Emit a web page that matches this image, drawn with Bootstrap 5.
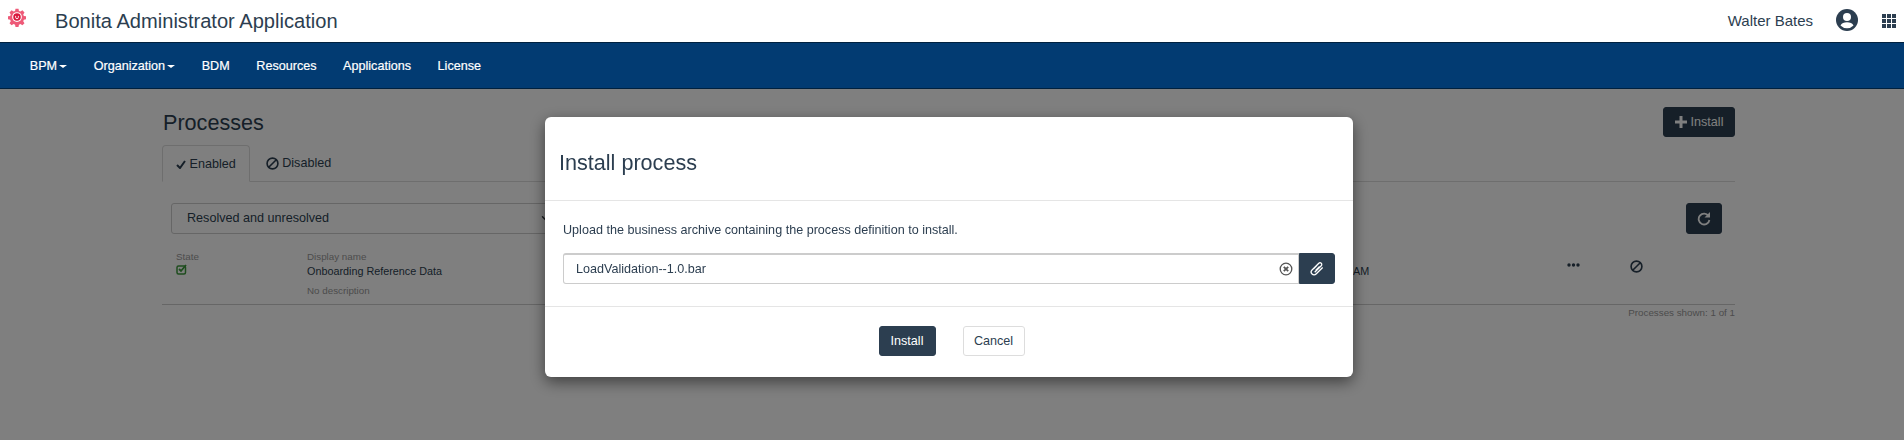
<!DOCTYPE html>
<html lang="en">
<head>
    <meta charset="UTF-8">
    <meta name="viewport" content="width=device-width, initial-scale=1">
    <title>Bonita Administrator Application</title>
    <link href="https://cdn.jsdelivr.net/npm/bootstrap@5.3.0/dist/css/bootstrap.min.css" rel="stylesheet">
    <style>
        html, body { height: 440px; overflow: hidden; }
        body { font-family: "Liberation Sans", Arial, sans-serif; font-size: 12.6px; color: #2c3e50; background: #fff; }

        /* top bars stay above the backdrop */
        .top-zone { position: relative; z-index: 1060; }
        .app-head { height: 43px; background: #fff; border-bottom: 1px solid #00213f; padding: 0 8px; }
        .app-title { font-size: 20.1px; margin: 1px 0 0 29px; line-height: 1; }
        .app-user { font-size: 15px; margin: 1px 23px 0 0; }
        .app-logo { margin-top: -8px; }
        .app-avatar { margin-top: -2px; }
        .menu-bar { height: 46px; background: #023b72; border-bottom: 1px solid #00213f; padding: 1px 16.5px 0; }
        .menu-bar a { color: #fff; font-size: 12.6px; padding: 0 13.3px; text-decoration: none; -webkit-text-stroke: .2px #fff; }
        .caret-down { display: inline-block; border-top: 3px solid #fff; border-left: 4px solid transparent; border-right: 4px solid transparent; margin-left: 2px; vertical-align: middle; }

        /* page under the backdrop */
        .page-main { padding: 18px 169px 0 162px; }
        .page-title { font-size: 21.6px; font-weight: 400; margin: 3px 0 0 1px; line-height: 26px; }
        .btn-dark-blue { background: #2c3e50; border-color: #2c3e50; color: #fff; font-size: 12.6px; line-height: 17px; padding: 5px 11px; border-radius: 3px; }
        .btn-dark-blue:hover { background: #2c3e50; border-color: #2c3e50; color: #fff; }
        .btn-top { width: 72px; height: 30px; padding: 0; }
        .proc-tabs { margin-top: 8px; border-color: #ddd; }
        .proc-tabs .nav-link { font-size: 12.6px; color: #2c3e50; padding: 9px 13px; height: 37px; border-radius: 4px 4px 0 0; line-height: 18px; }
        .proc-tabs .nav-link.active { border-color: #ddd #ddd #fff; color: #2c3e50; }
        .proc-tabs .tab-off { padding-left: 16px; }
        .filter-line { padding: 21px 13px 0 9px; }
        .filter-select { width: 397px; height: 31px; font-size: 12.6px; color: #2c3e50; padding: 0 30px 0 15px; border-radius: 3px; border-color: #ccc; }
        .btn-refresh { width: 36px; height: 31px; padding: 0; }
        .proc-row { height: 71px; padding: 0 0 0 14px; border-bottom: 1px solid #ccc; margin-top: 0; }
        .row-state { width: 131px; padding-top: 16px; }
        .state-icon { display: block; margin-top: 1px; }
        .row-name { width: 1046px; padding-top: 16px; }
        .row-date { width: 214px; padding-top: 29px; }
        .row-dots { width: 63px; padding-top: 29px; }
        .row-ban { padding-top: 26px; }
        .hint-label { font-size: 9.8px; color: #999; line-height: 13px; }
        .row-main-text { font-size: 10.8px; line-height: 16px; }
        .row-desc { margin-top: 5px; }
        .shown-line { font-size: 9.8px; color: #999; line-height: 13px; padding-top: 1px; }

        /* modal */
        .install-dialog { max-width: 808px; margin: 117px 0 0 545px; }
        .install-content { border: 0; border-radius: 6px; box-shadow: 0 5px 15px rgba(0,0,0,.5); height: 260px; }
        .install-head { height: 84px; padding: 0 14px; border-bottom: 1px solid #e5e5e5; border-radius: 6px 6px 0 0; }
        .install-title { font-size: 21.6px; font-weight: 400; line-height: 1; margin: 8px 0 0; }
        .install-body { height: 105px; flex: none; padding: 21px 18px 0; }
        .install-body p { font-size: 12.6px; line-height: 16px; margin-bottom: 15px; }
        .file-input { height: 31px; font-size: 12.6px; color: #2c3e50; padding: 0 36px 0 12px; border: 1px solid #ccc; border-top-width: 2px; border-radius: 3px 0 0 3px; }
        .file-wrap { position: relative; flex: 1 1 auto; }
        .file-clear { position: absolute; right: 6px; top: 9px; line-height: 0; }
        .btn-clip { width: 36px; height: 31px; padding: 0; border-radius: 0 3px 3px 0; }
        .install-foot { height: 71px; border-top: 1px solid #e5e5e5; gap: 27px; padding: 0 0 2px 5px; }
        .btn-install { width: 57px; height: 30px; padding: 0; }
        .btn-cancel { width: 62px; height: 30px; padding: 0; font-size: 12.6px; background: #fff; color: #2c3e50; border: 1px solid #ddd; border-radius: 3px; }
    </style>
</head>
<body>

<div class="top-zone">
    <div class="app-head d-flex align-items-center">
        <svg class="app-logo" width="18" height="20" viewBox="0 0 24 24">
            <path fill="#ee5a78" d="M10 1h4l.6 3 2 .8 2.6-1.7 2.8 2.8-1.7 2.6.8 2 3 .6v4l-3 .6-.8 2 1.700 2.600-2.800 2.800-2.600-1.700-2 .8-.6 3h-4l-.6-3-2-.8-2.600 1.700-2.800-2.800 1.700-2.600-.8-2-3-.6v-4l3-.6.8-2-1.700-2.600 2.800-2.800 2.600 1.700 2-.8z"/>
            <circle cx="12" cy="12" r="6.500" fill="#fff"/>
            <circle cx="12" cy="12" r="5" fill="#d9163c"/>
            <path fill="none" stroke="#fff" stroke-width="1.200" d="M10.200 10.500v2a1.800 1.800 0 0 0 3.600 0v-2"/>
        </svg>
        <span class="app-title">Bonita Administrator Application</span>
        <span class="app-user ms-auto">Walter Bates</span>
        <svg class="app-avatar" width="22" height="22" viewBox="0 0 22 22">
            <circle cx="11" cy="11" r="11" fill="#2c3e50"/>
            <circle cx="11" cy="8" r="4" fill="#fff"/>
            <path fill="#fff" d="M4.500 16.500c1-2.500 3.500-3.200 6.500-3.200s5.500.7 6.500 3.200a9 9 0 0 1-13 0z"/>
        </svg>
        <svg class="ms-4" width="14" height="14" viewBox="0 0 14 14" fill="#2c3e50">
            <rect width="4" height="4"/><rect x="5" width="4" height="4"/><rect x="10" width="4" height="4"/>
            <rect y="5" width="4" height="4"/><rect x="5" y="5" width="4" height="4"/><rect x="10" y="5" width="4" height="4"/>
            <rect y="10" width="4" height="4"/><rect x="5" y="10" width="4" height="4"/><rect x="10" y="10" width="4" height="4"/>
        </svg>
    </div>
    <nav class="menu-bar d-flex align-items-center">
        <a href="#">BPM<span class="caret-down"></span></a>
        <a href="#">Organization<span class="caret-down"></span></a>
        <a href="#">BDM</a>
        <a href="#">Resources</a>
        <a href="#">Applications</a>
        <a href="#">License</a>
    </nav>
</div>

<main class="page-main">
    <div class="d-flex justify-content-between">
        <h1 class="page-title">Processes</h1>
        <button class="btn btn-dark-blue btn-top d-flex align-items-center justify-content-center gap-1">
            <svg width="12" height="12" viewBox="0 0 12 12"><path fill="#fff" d="M4.500 0h3v4.500H12v3H7.500V12h-3V7.500H0v-3h4.500z"/></svg>Install
        </button>
    </div>

    <ul class="nav nav-tabs proc-tabs">
        <li class="nav-item">
            <a class="nav-link active" href="#">
                <svg width="10" height="9" viewBox="0 0 10 9"><path fill="none" stroke="#2c3e50" stroke-width="2" d="M1 5l3 3 5-7"/></svg>
                Enabled
            </a>
        </li>
        <li class="nav-item">
            <a class="nav-link border-0 tab-off" href="#">
                <svg width="13" height="13" viewBox="0 0 12 12"><circle cx="6" cy="6" r="5" fill="none" stroke="#2c3e50" stroke-width="1.500"/><path stroke="#2c3e50" stroke-width="1.500" d="M2.500 9.500l7-7"/></svg>
                Disabled
            </a>
        </li>
    </ul>

    <div class="filter-line d-flex justify-content-between">
        <select class="form-select filter-select">
            <option>Resolved and unresolved</option>
        </select>
        <button class="btn btn-dark-blue btn-refresh d-flex align-items-center justify-content-center">
            <svg width="14" height="14" viewBox="0 0 14 14"><path fill="none" stroke="#fff" stroke-width="1.800" d="M11.500 4A5.400 5.400 0 1 0 12.400 8"/><path fill="#fff" d="M13 0v5.500H7.500z"/></svg>
        </button>
    </div>

    <div class="proc-row d-flex">
        <div class="row-state">
            <div class="hint-label">State</div>
            <svg class="state-icon" width="11" height="11" viewBox="0 0 11 11"><rect x="1" y="2" width="8.500" height="8" rx="1.500" fill="none" stroke="#3c9a3c" stroke-width="1.500"/><path fill="none" stroke="#3c9a3c" stroke-width="1.800" d="M3 5l2 2 5-6"/></svg>
        </div>
        <div class="row-name">
            <div class="hint-label">Display name</div>
            <div class="row-main-text">Onboarding Reference Data</div>
            <div class="hint-label row-desc">No description</div>
        </div>
        <div class="row-date row-main-text">AM</div>
        <div class="row-dots">
            <svg class="d-block" width="13" height="4" viewBox="0 0 13 4" fill="#2c3e50"><circle cx="2" cy="2" r="1.700"/><circle cx="6.500" cy="2" r="1.700"/><circle cx="11" cy="2" r="1.700"/></svg>
        </div>
        <div class="row-ban">
            <svg class="d-block" width="13" height="13" viewBox="0 0 12 12"><circle cx="6" cy="6" r="5" fill="none" stroke="#2c3e50" stroke-width="1.500"/><path stroke="#2c3e50" stroke-width="1.500" d="M2.500 9.500l7-7"/></svg>
        </div>
    </div>
    <div class="shown-line text-end">Processes shown: 1 of 1</div>
</main>

<div class="modal-backdrop show"></div>

<div class="modal d-block" tabindex="-1">
    <div class="modal-dialog install-dialog">
        <div class="modal-content install-content">
            <div class="install-head d-flex align-items-center">
                <h4 class="install-title">Install process</h4>
            </div>
            <div class="install-body">
                <p>Upload the business archive containing the process definition to install.</p>
                <div class="d-flex">
                    <div class="file-wrap">
                        <input type="text" class="form-control file-input" value="LoadValidation--1.0.bar">
                        <span class="file-clear">
                            <svg width="14" height="14" viewBox="0 0 14 14"><circle cx="7" cy="7" r="5.800" fill="none" stroke="#555" stroke-width="1.300"/><path stroke="#555" stroke-width="1.800" d="M4.800 4.800l4.400 4.400M9.200 4.800l-4.400 4.400"/></svg>
                        </span>
                    </div>
                    <button class="btn btn-dark-blue btn-clip d-flex align-items-center justify-content-center">
                        <svg width="15" height="15" viewBox="0 0 16 16"><path fill="none" stroke="#fff" stroke-width="1.400" d="M5 12l7-7a1.800 1.800 0 0 0-2.600-2.600L2.200 9.600a3 3 0 0 0 4.300 4.300L13.500 7M7.500 4.500L3.800 8.200M10 6l-4 4"/></svg>
                    </button>
                </div>
            </div>
            <div class="install-foot d-flex align-items-center justify-content-center">
                <button class="btn btn-dark-blue btn-install">Install</button>
                <button class="btn btn-cancel">Cancel</button>
            </div>
        </div>
    </div>
</div>

<script src="https://cdn.jsdelivr.net/npm/bootstrap@5.3.0/dist/js/bootstrap.bundle.min.js"></script>
</body>
</html>
